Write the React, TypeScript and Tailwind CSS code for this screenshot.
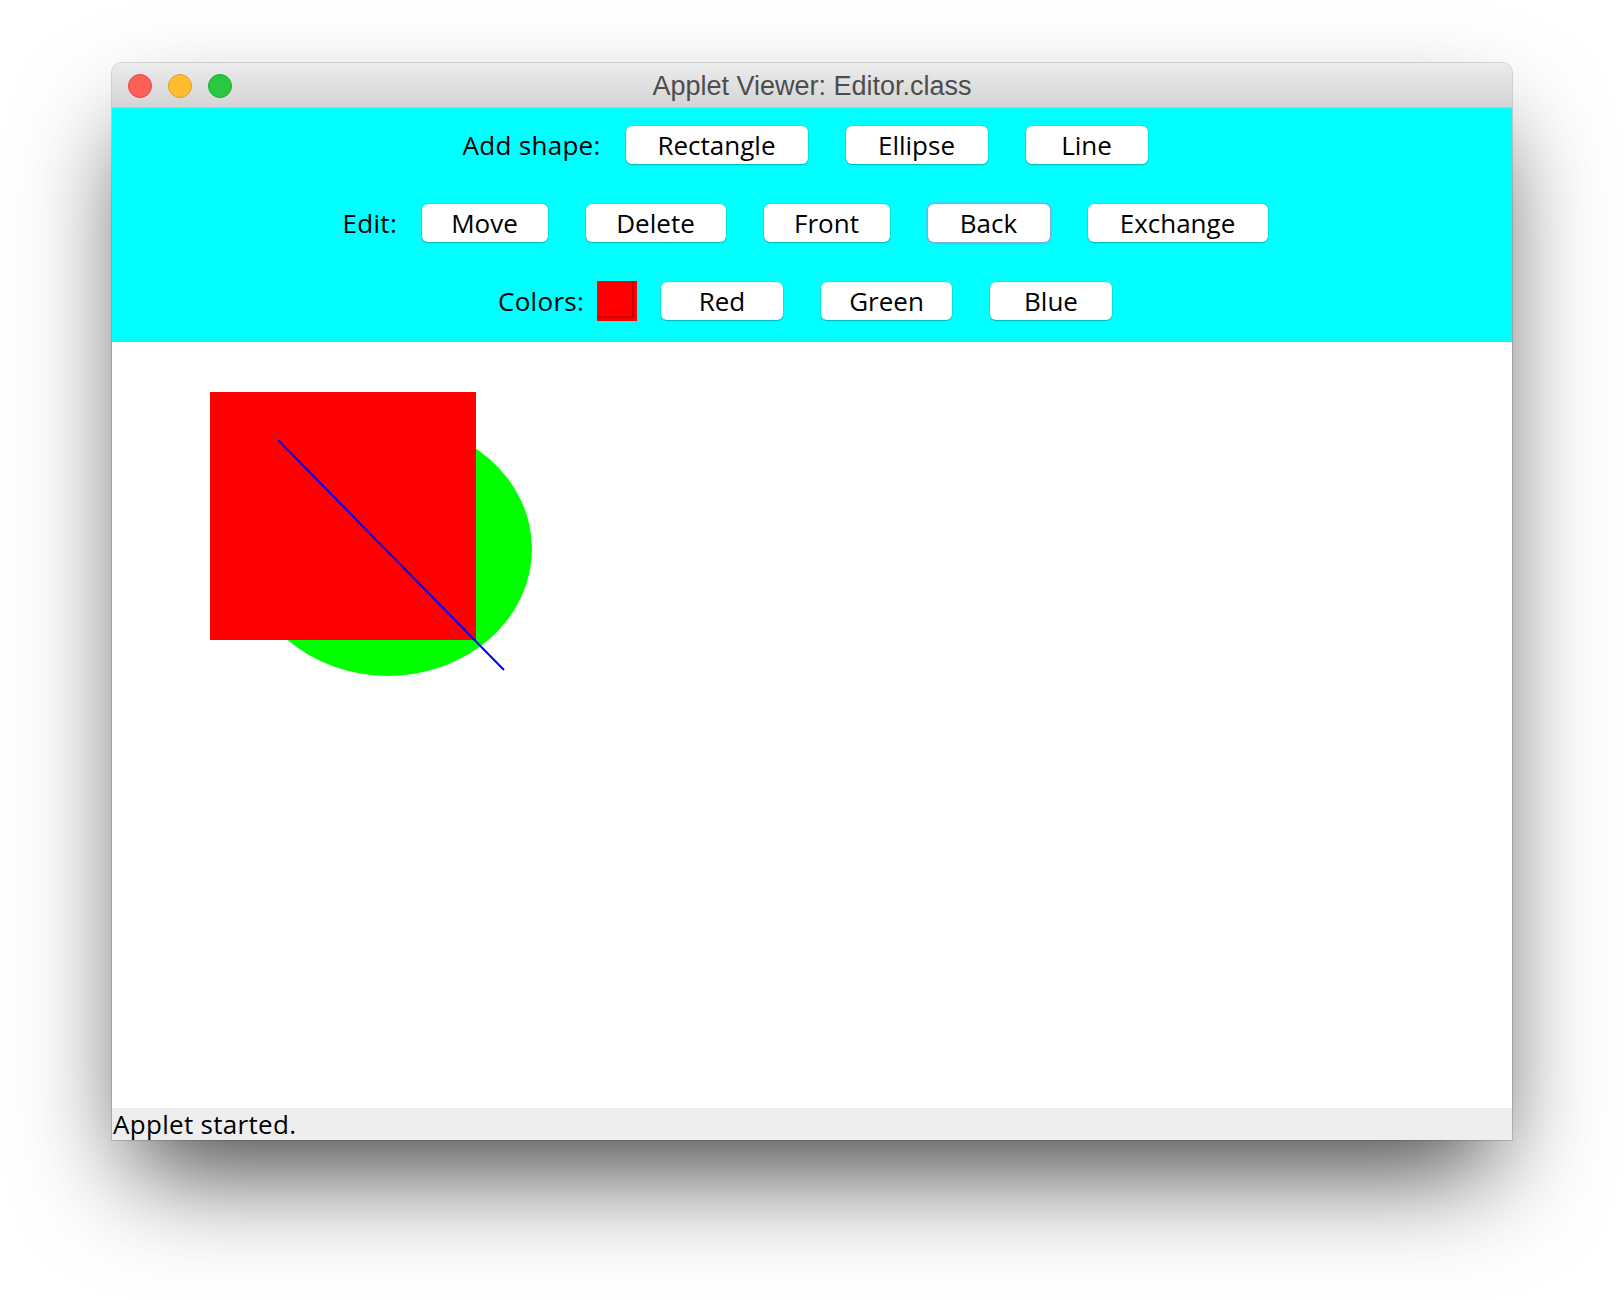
const rows = [
  {
    label: 'Add shape:',
    labelWidth: 'w-[138px] mr-[25px]',
    buttons: [
      { text: 'Rectangle', w: 'w-[182px]' },
      { text: 'Ellipse', w: 'w-[142px]' },
      { text: 'Line', w: 'w-[122px]' },
    ],
  },
  {
    label: 'Edit:',
    labelWidth: 'w-[54px] mr-[25px]',
    buttons: [
      { text: 'Move', w: 'w-[126px]' },
      { text: 'Delete', w: 'w-[140px]' },
      { text: 'Front', w: 'w-[126px]' },
      { text: 'Back', w: 'w-[122px]', focused: true },
      { text: 'Exchange', w: 'w-[180px]' },
    ],
  },
  {
    label: 'Colors:',
    labelWidth: 'w-[88px] mr-[11px]',
    swatch: true,
    buttons: [
      { text: 'Red', w: 'w-[122px]' },
      { text: 'Green', w: 'w-[131px]' },
      { text: 'Blue', w: 'w-[122px]' },
    ],
  },
];

function AquaButton({ text, w, focused }: { text: string; w: string; focused?: boolean }) {
  return (
    <button
      className={`${w} h-[38px] rounded-[6px] bg-white text-center text-[26px] leading-[38px] text-black ${
        focused
          ? 'shadow-[0_0_0_1.5px_#7dacee,0_1px_2px_rgba(0,0,0,0.2)]'
          : 'shadow-[0_0_0_0.5px_rgba(0,0,0,0.12),0_1px_1.5px_rgba(0,0,0,0.25)]'
      }`}
    >
      {text}
    </button>
  );
}

function Swatch() {
  return (
    <div className="mr-[24px] h-[40px] w-[40px] bg-[#ff0000]">
      <div className="h-[37px] w-[37px] border-r-2 border-b-2 border-[#c40000]" />
    </div>
  );
}

export default function App() {
  return (
    <div className="min-h-[1300px] bg-white pt-[63px] pl-[112px] font-['Open_Sans',sans-serif]">
      <div className="w-[1400px] rounded-t-[10px] bg-white shadow-[0_0_0_1px_rgba(0,0,0,0.14),0_50px_100px_-20px_rgba(0,0,0,0.75)]">
        {/* title bar */}
        <div className="grid h-[45px] grid-cols-[1fr_auto_1fr] items-center rounded-t-[10px] border-b border-[#c6c6c6] bg-gradient-to-b from-[#ececec] to-[#d4d4d4]">
          <div className="flex items-center gap-[16px] pl-[16px]">
            <span className="h-[24px] w-[24px] rounded-full border border-[#e0443e] bg-[#fe5f57]" />
            <span className="h-[24px] w-[24px] rounded-full border border-[#dea123] bg-[#febc2e]" />
            <span className="h-[24px] w-[24px] rounded-full border border-[#1aab29] bg-[#28c840]" />
          </div>
          <div className="pt-[2px] font-['Liberation_Sans',Arial,sans-serif] text-[27px] leading-[43px] text-[#4d4d4d]">
            Applet Viewer: Editor.class
          </div>
          <div />
        </div>

        {/* tool panel */}
        <div className="flex h-[234px] flex-col gap-[40px] bg-[#00ffff] pt-[18px] pr-[14px]">
          {rows.map((row) => (
            <div key={row.label} className="flex h-[38px] items-center justify-center">
              <span className={`${row.labelWidth} whitespace-nowrap text-[26px] leading-[38px] tracking-[0.3px] text-black`}>
                {row.label}
              </span>
              {row.swatch && <Swatch />}
              <div className="flex gap-[38px]">
                {row.buttons.map((b) => (
                  <AquaButton key={b.text} {...b} />
                ))}
              </div>
            </div>
          ))}
        </div>

        {/* drawing canvas */}
        <div className="relative h-[766px] bg-white">
          <svg className="absolute inset-0" width="1400" height="766" viewBox="0 0 1400 766">
            <ellipse cx="276" cy="207" rx="144" ry="127" fill="#00ff00" />
            <rect x="98" y="50" width="266" height="248" fill="#ff0000" />
            <line x1="166" y1="98" x2="392" y2="328" stroke="#0000ff" strokeWidth="2" />
          </svg>
        </div>

        {/* status bar */}
        <div className="h-[32px] bg-[#eeeeee] pl-px text-[26px] leading-[32px] tracking-[0.3px] text-black">
          Applet started.
        </div>
      </div>
    </div>
  );
}
